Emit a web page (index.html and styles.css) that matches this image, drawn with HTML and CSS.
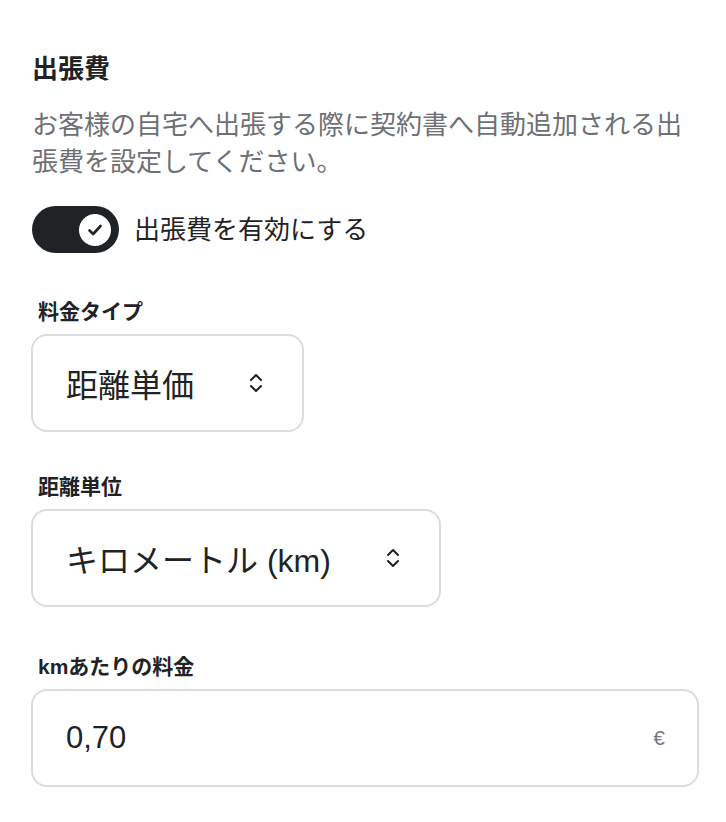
FILE: index.html
```html
<!DOCTYPE html>
<html lang="ja">
<head>
  <meta charset="utf-8">
  <title>出張費</title>
  <link rel="stylesheet" href="styles.css">
</head>
<body>
<div class="panel">
  <h2 class="title">出張費</h2>
  <p class="desc">お客様の自宅へ出張する際に契約書へ自動追加される出張費を設定してください。</p>

  <label class="switch-row">
    <span class="switch">
      <span class="knob">
        <svg width="16" height="14" viewBox="0 0 16 14"><path d="M2.5 7.5 L6.2 11 L13.5 3" fill="none" stroke="#1f2326" stroke-width="2.6" stroke-linecap="round" stroke-linejoin="round"/></svg>
      </span>
    </span>
    <span class="switch-label">出張費を有効にする</span>
  </label>

  <div class="field">
    <div class="field-label">料金タイプ</div>
    <div class="select">
      <span>距離単価</span>
      <svg class="chev" width="14" height="22" viewBox="0 0 14 22"><path d="M2 8 L7 3 L12 8 M2 14 L7 19 L12 14" fill="none" stroke="#1f2326" stroke-width="2" stroke-linecap="round" stroke-linejoin="round"/></svg>
    </div>
  </div>

  <div class="field">
    <div class="field-label">距離単位</div>
    <div class="select">
      <span>キロメートル (km)</span>
      <svg class="chev" width="14" height="22" viewBox="0 0 14 22"><path d="M2 8 L7 3 L12 8 M2 14 L7 19 L12 14" fill="none" stroke="#1f2326" stroke-width="2" stroke-linecap="round" stroke-linejoin="round"/></svg>
    </div>
  </div>

  <div class="field field-price">
    <div class="field-label">kmあたりの料金</div>
    <div class="input">
      <span class="value">0,70</span>
      <span class="unit">€</span>
    </div>
  </div>
</div>
</body>
</html>
```

FILE: styles.css
```css
*{
  margin: 0;
  padding: 0;
  box-sizing: border-box;
}
body{
  background: #fff;
  color: #1f2326;
  font-family: "Liberation Sans", "Noto Sans CJK JP", sans-serif;
}
.panel{
  width: 699px;
  padding: 50px 0 0 31px;
}
.title{
  font-size: 26px;
  font-weight: 700;
  line-height: 38px;
  padding-left: 1px;
}
.desc{
  margin-top: 19px;
  padding-left: 1px;
  font-size: 26px;
  line-height: 37px;
  color: #6d7074;
}
.switch-row{
  display: flex;
  align-items: center;
  gap: 15px;
  margin-top: 25px;
  padding-left: 1px;
}
.switch{
  width: 87px;
  height: 47px;
  border-radius: 24px;
  background: #1f2326;
  display: flex;
  align-items: center;
  justify-content: flex-end;
  padding-right: 8px;
}
.knob{
  width: 32px;
  height: 32px;
  border-radius: 50%;
  background: #fff;
  display: flex;
  align-items: center;
  justify-content: center;
}
.switch-label{
  font-size: 26px;
  line-height: 38px;
}
.field{
  margin-top: 40px;
}
.switch-row + .field{
  margin-top: 44px;
}
.field-price{
  margin-top: 45px;
}
.field-label{
  font-size: 21px;
  font-weight: 600;
  line-height: 30px;
  padding-left: 7px;
  margin-bottom: 7px;
}
.select{
  display: inline-flex;
  align-items: center;
  gap: 55px;
  height: 98px;
  padding: 0 39px 0 33px;
  border: 2px solid #dcdcdc;
  border-radius: 16px;
  font-size: 32px;
}
.input{
  display: flex;
  align-items: center;
  justify-content: space-between;
  height: 98px;
  padding: 0 32px 0 33px;
  border: 2px solid #dcdcdc;
  border-radius: 16px;
}
.input .value{
  font-size: 31px;
}
.input .unit{
  font-size: 21px;
  color: #77797c;
}
```
